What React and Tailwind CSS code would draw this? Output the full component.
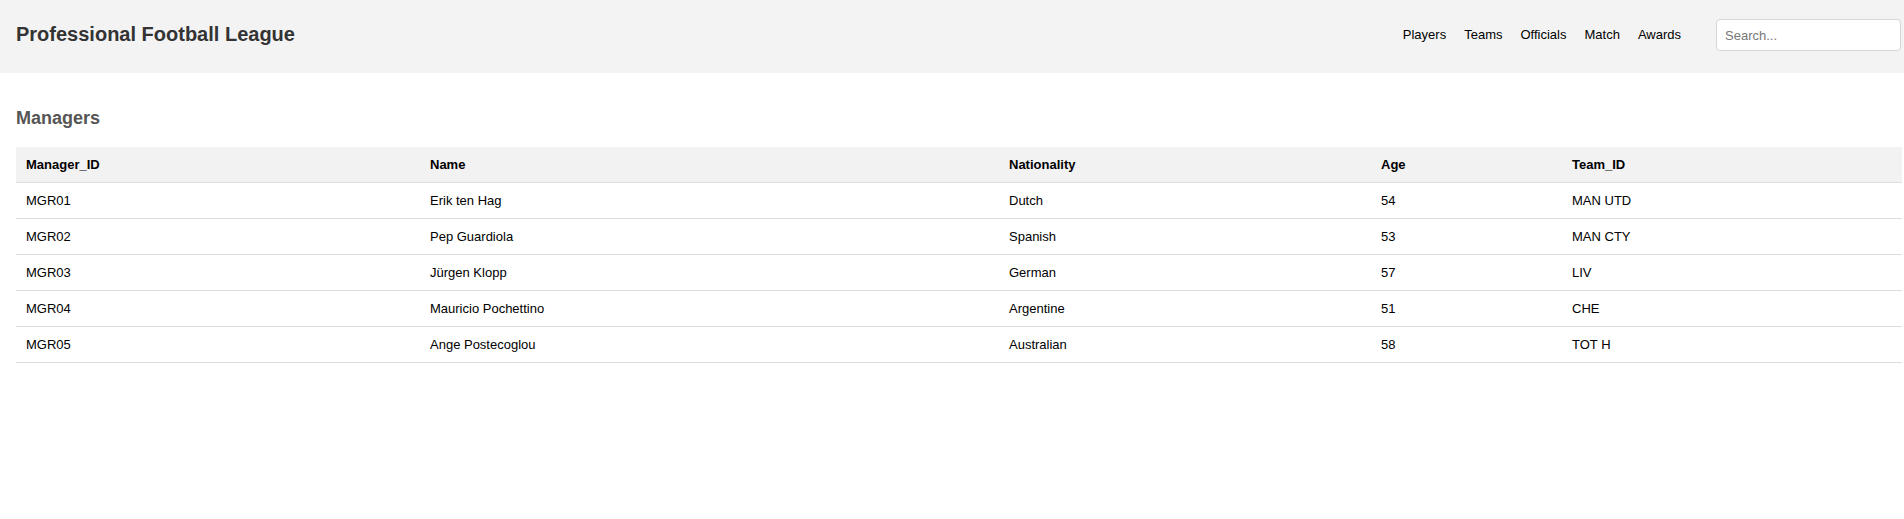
const managers = [
  { id: 'MGR01', name: 'Erik ten Hag', nationality: 'Dutch', age: 54, team: 'MAN UTD' },
  { id: 'MGR02', name: 'Pep Guardiola', nationality: 'Spanish', age: 53, team: 'MAN CTY' },
  { id: 'MGR03', name: 'Jürgen Klopp', nationality: 'German', age: 57, team: 'LIV' },
  { id: 'MGR04', name: 'Mauricio Pochettino', nationality: 'Argentine', age: 51, team: 'CHE' },
  { id: 'MGR05', name: 'Ange Postecoglou', nationality: 'Australian', age: 58, team: 'TOT H' },
];

const navLinks = ['Players', 'Teams', 'Officials', 'Match', 'Awards'];

function App() {
  return (
    <div className="min-h-screen bg-white text-black font-['Liberation_Sans',Arial,sans-serif]">
      {/* Top bar */}
      <header className="h-[73px] bg-[#f3f3f3] flex items-center justify-between pl-4 pr-[3px] pb-[3px]">
        <h1 className="text-[20px] font-bold text-[#333] mb-[2px]">Professional Football League</h1>
        <div className="flex items-center">
          <nav className="flex items-center gap-[18px] text-[13px] text-black mb-[1px]">
            {navLinks.map((link) => (
              <a key={link} href="#" className="hover:underline">{link}</a>
            ))}
          </nav>
          <input
            type="text"
            placeholder="Search..."
            className="ml-[35px] w-[185px] h-[32px] px-2 text-[13px] bg-white border border-[#d6d6d6] rounded-[4px] placeholder:text-[#777] outline-none"
          />
        </div>
      </header>

      {/* Managers table */}
      <main className="pl-4">
        <h2 className="mt-[34px] mb-[18px] text-[18px] leading-[22px] font-bold text-[#555]">Managers</h2>
        <table className="w-[1886px] table-fixed border-collapse text-[13px] leading-[15px]">
          <colgroup>
            <col className="w-[404px]" />
            <col className="w-[579px]" />
            <col className="w-[372px]" />
            <col className="w-[191px]" />
            <col />
          </colgroup>
          <thead>
            <tr className="bg-[#f2f2f2]">
              {['Manager_ID', 'Name', 'Nationality', 'Age', 'Team_ID'].map((h) => (
                <th key={h} className="text-left font-bold px-[10px] py-[10px] border-b border-[#ddd]">{h}</th>
              ))}
            </tr>
          </thead>
          <tbody>
            {managers.map((m) => (
              <tr key={m.id}>
                <td className="px-[10px] py-[10px] border-b border-[#ddd]">{m.id}</td>
                <td className="px-[10px] py-[10px] border-b border-[#ddd]">{m.name}</td>
                <td className="px-[10px] py-[10px] border-b border-[#ddd]">{m.nationality}</td>
                <td className="px-[10px] py-[10px] border-b border-[#ddd]">{m.age}</td>
                <td className="px-[10px] py-[10px] border-b border-[#ddd]">{m.team}</td>
              </tr>
            ))}
          </tbody>
        </table>
      </main>
    </div>
  );
}

export default App;
